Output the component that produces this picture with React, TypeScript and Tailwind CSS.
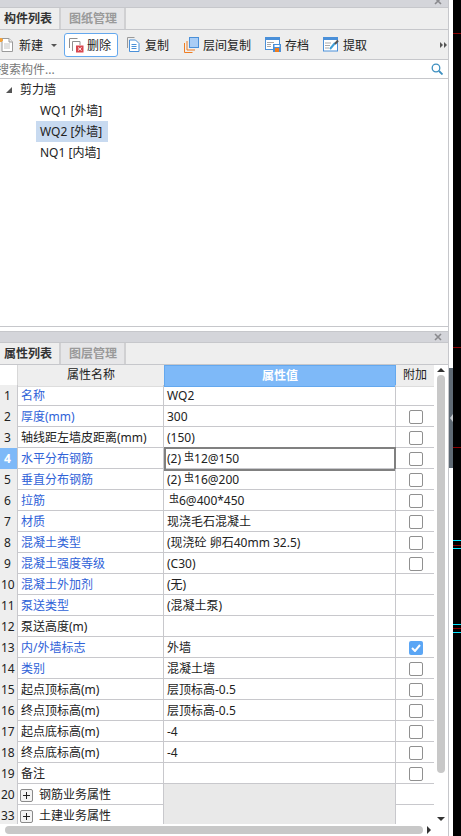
const FONT = "font-['Noto_Sans','Noto_Sans_CJK_SC',sans-serif]"

const Rebar = ({ first }: { first?: boolean }) => (
  <span className={first ? "ml-[2px] text-[10px] leading-[0] align-[3px] text-[#222]" : "ml-[3px] text-[10px] leading-[0] align-[3px] text-[#222]"}>虫</span>
)

const CloseX = () => (
  <svg width="8" height="8" viewBox="0 0 8 8" className="block">
    <path d="M1 1l6 6M7 1L1 7" stroke="#8a8a8e" strokeWidth="1.6" />
  </svg>
)

const NewIcon = () => (
  <svg width="15" height="16" viewBox="0 0 15 16" className="block">
    <path d="M3 1.500h7l3.500 3.500v9.500H3z" fill="#fff" stroke="#9a9a9a" />
    <path d="M10 1.500V5h3.500" fill="#eee" stroke="#9a9a9a" />
    <path d="M5 7h6M5 9h6M5 11h6" stroke="#c4c4c4" />
    <path d="M0 1h3v1h1v2H3v1H0z" fill="#f2a23c" />
  </svg>
)

const DeleteIcon = () => (
  <svg width="16" height="16" viewBox="0 0 16 16" className="block">
    <path d="M1.500 11V1.500h8" fill="none" stroke="#8f8f8f" />
    <path d="M4.500 14V4.500h7.500V8" fill="#fff" stroke="#8f8f8f" />
    <rect x="8" y="8.500" width="7.500" height="7" fill="#d9474f" />
    <path d="M10 10.500l3.500 3M13.500 10.500l-3.500 3" stroke="#fff" />
  </svg>
)

const CopyIcon = () => (
  <svg width="14" height="15" viewBox="0 0 14 15" className="block">
    <path d="M.5 11V.5h7" fill="none" stroke="#9a9a9a" />
    <path d="M2.500 3h6l3.500 3.500v8H2.500z" fill="#fff" stroke="#4a90d9" />
    <path d="M4.500 7.500h5M4.500 9.500h5M4.500 11.500h5" stroke="#4a90d9" />
  </svg>
)

const FloorCopyIcon = () => (
  <svg width="15" height="16" viewBox="0 0 15 16" className="block">
    <path d="M.5 6v9.500h8" fill="none" stroke="#ef7d22" />
    <path d="M3 4v9h8" fill="none" stroke="#ef7d22" />
    <rect x="5.500" y=".5" width="9" height="10" fill="#a9cdf6" stroke="#4a90d9" />
  </svg>
)

const SaveIcon = () => (
  <svg width="16" height="15" viewBox="0 0 16 15" className="block">
    <rect x=".5" y=".5" width="14" height="12" fill="#fff" stroke="#4a90d9" />
    <rect x="0" y="0" width="15" height="3" fill="#4a90d9" />
    <path d="M2 5.500h7M2 7.500h4M2 9.500h4" stroke="#a8a8a8" />
    <rect x="8" y="7" width="8" height="8" fill="#4a90d9" />
    <rect x="9.500" y="8" width="5" height="2" fill="#fff" />
    <rect x="10" y="11" width="4" height="4" fill="#f07d1e" />
  </svg>
)

const ExtractIcon = () => (
  <svg width="16" height="15" viewBox="0 0 16 15" className="block">
    <rect x=".5" y=".5" width="14" height="13.500" fill="#fff" stroke="#4a90d9" />
    <rect x="0" y="0" width="15" height="3" fill="#4a90d9" />
    <path d="M2 6h6M2 8.500h5M2 11h4" stroke="#a8a8a8" />
    <path d="M7 12l5-6" stroke="#3f9fd8" strokeWidth="2" />
    <path d="M12 7l3-3.500" stroke="#555" strokeWidth="2" />
  </svg>
)

const Checkbox = ({ checked }: { checked?: boolean }) =>
  checked ? (
    <span className="flex h-[14px] w-[14px] items-center justify-center rounded-[2px] bg-[#5ba6f5]">
      <svg width="10" height="8" viewBox="0 0 10 8">
        <path d="M1 4l3 3 5-6" fill="none" stroke="#fff" strokeWidth="2" />
      </svg>
    </span>
  ) : (
    <span className="h-[14px] w-[14px] rounded-[2px] border border-[#909090] bg-white" />
  )

const PanelHeader = ({ active, other }: { active: string; other: string }) => (
  <div className="flex h-[22px] border-b border-[#c6c7cb] bg-[#eeeeee] text-[12px] font-bold leading-[21px]">
    <div className="w-[61px] border-r-2 border-[#d0d0d2] pl-[4px] text-[#333]">{active}</div>
    <div className="w-[65px] border-r-2 border-[#d0d0d2] bg-[#e6e6e8] pl-[8px] text-[#9a9a9a]">{other}</div>
  </div>
)

type Row = {
  no: number
  name: string
  blue?: boolean
  value?: React.ReactNode
  box?: boolean
  checked?: boolean
}

const rows: Row[] = [
  { no: 1, name: "名称", blue: true, value: "WQ2" },
  { no: 2, name: "厚度(mm)", blue: true, value: "300", box: true },
  { no: 3, name: "轴线距左墙皮距离(mm)", value: "(150)", box: true },
  { no: 4, name: "水平分布钢筋", blue: true, value: <>(2)<Rebar />12@150</>, box: true },
  { no: 5, name: "垂直分布钢筋", blue: true, value: <>(2)<Rebar />16@200</>, box: true },
  { no: 6, name: "拉筋", blue: true, value: <><Rebar first />6@400*450</>, box: true },
  { no: 7, name: "材质", blue: true, value: "现浇毛石混凝土", box: true },
  { no: 8, name: "混凝土类型", blue: true, value: "(现浇砼 卵石40mm 32.5)", box: true },
  { no: 9, name: "混凝土强度等级", blue: true, value: "(C30)", box: true },
  { no: 10, name: "混凝土外加剂", blue: true, value: "(无)" },
  { no: 11, name: "泵送类型", blue: true, value: "(混凝土泵)" },
  { no: 12, name: "泵送高度(m)" },
  { no: 13, name: "内/外墙标志", blue: true, value: "外墙", box: true, checked: true },
  { no: 14, name: "类别", blue: true, value: "混凝土墙", box: true },
  { no: 15, name: "起点顶标高(m)", value: "层顶标高-0.5", box: true },
  { no: 16, name: "终点顶标高(m)", value: "层顶标高-0.5", box: true },
  { no: 17, name: "起点底标高(m)", value: "-4", box: true },
  { no: 18, name: "终点底标高(m)", value: "-4", box: true },
  { no: 19, name: "备注", box: true },
]

const ToolButton = ({ icon, label, className }: { icon: React.ReactNode; label: string; className?: string }) => (
  <div className={`flex items-center ${className ?? ""}`}>
    {icon}
    <span className="ml-[4px] mt-[2px]">{label}</span>
  </div>
)

const GroupRow = ({ no, label }: { no: number; label: string }) => (
  <div className="grid h-[21px] grid-cols-[18px_146px_232px_38px] border-b border-[#c8c8cc] leading-[22px]">
    <div className="border-r border-[#c8c8cc] bg-[#eeeeee] pl-[1px]">{no}</div>
    <div className="flex items-center border-r border-[#c8c8cc]">
      <span className="ml-[2px] flex h-[13px] w-[13px] items-center justify-center rounded-[2px] border border-[#8a8a8a] bg-[#f4f4f4]">
        <svg width="7" height="7" viewBox="0 0 7 7"><path d="M3.500 0v7M0 3.500h7" stroke="#222" /></svg>
      </span>
      <span className="ml-[6px]">{label}</span>
    </div>
    <div className="border-r border-[#c8c8cc] bg-[#e9e9e9]" />
    <div />
  </div>
)

export default function App() {
  return (
    <div className={`flex h-[836px] w-[461px] overflow-hidden bg-white text-[12px] text-[#222] ${FONT}`}>
      <div className="flex h-full w-[449px] flex-col border-r border-[#c6c7cb]">
        {/* upper panel */}
        <div className="flex h-[8px] justify-end overflow-hidden border-b border-[#c6c7cb] bg-[#d4d5da] pr-[6px]">
          <div className="-mt-[3px]"><CloseX /></div>
        </div>
        <PanelHeader active="构件列表" other="图纸管理" />
        <div className="flex h-[30px] items-center border-b border-[#c6c7cb] bg-[#eeeeee] leading-[16px]">
          <div className="-ml-[1px] flex items-center">
            <NewIcon />
            <span className="ml-[5px] mt-[2px]">新建</span>
            <span className="ml-[8px] mt-[1px] h-0 w-0 border-x-[3px] border-t-[3px] border-x-transparent border-t-[#555]" />
          </div>
          <div className="ml-[7px] flex h-[24px] w-[54px] items-center rounded-[3px] border border-[#64a8ee] bg-white pl-[3px]">
            <DeleteIcon />
            <span className="ml-[3px] mt-[2px]">删除</span>
          </div>
          <ToolButton className="ml-[9px]" icon={<CopyIcon />} label="复制" />
          <ToolButton className="ml-[15px]" icon={<FloorCopyIcon />} label="层间复制" />
          <ToolButton className="ml-[14px]" icon={<SaveIcon />} label="存档" />
          <ToolButton className="ml-[14px]" icon={<ExtractIcon />} label="提取" />
          <div className="ml-auto mr-[1px] flex">
            <span className="h-0 w-0 border-y-[3px] border-l-[3px] border-y-transparent border-l-[#555]" />
            <span className="ml-[1px] h-0 w-0 border-y-[3px] border-l-[3px] border-y-transparent border-l-[#555]" />
          </div>
        </div>
        <div className="flex h-[19px] items-start justify-between border-b border-[#c6c7cb] bg-white leading-[20px]">
          <span className="-ml-[3px] text-[#777]">搜索构件...</span>
          <svg width="12" height="12" viewBox="0 0 12 12" className="mr-[5px] mt-[3px] block">
            <circle cx="5" cy="5" r="3.800" fill="none" stroke="#3d8fc0" strokeWidth="1.300" />
            <path d="M8 8l3.500 3.500" stroke="#3d8fc0" strokeWidth="1.800" />
          </svg>
        </div>
        <div className="h-[248px] border-b border-[#c6c7cb] bg-white leading-[22px]">
          <div className="flex h-[21px] items-start">
            <span className="ml-[6px] mt-[8px] h-0 w-0 border-b-[6px] border-l-[6px] border-b-[#555] border-l-transparent" />
            <span className="ml-[8px]">剪力墙</span>
          </div>
          <div className="h-[21px] pl-[40px]">WQ1 [外墙]</div>
          <div className="ml-[36px] h-[21px] w-[72px] bg-[#c8daf0] pl-[4px]">WQ2 [外墙]</div>
          <div className="h-[21px] pl-[40px]">NQ1 [内墙]</div>
        </div>

        {/* lower panel */}
        <div className="h-[4px] bg-white" />
        <div className="flex h-[12px] items-center justify-end border-y border-[#c6c7cb] bg-[#d4d5da] pr-[6px]">
          <CloseX />
        </div>
        <PanelHeader active="属性列表" other="图层管理" />
        <div className="flex min-h-0 flex-1">
          <div className="w-[434px]">
            <div className="h-[459px] overflow-hidden">
              <div className="grid h-[20px] grid-cols-[18px_146px_232px_38px] text-center leading-[20px]">
                <div className="border-r border-[#d8d8d8] bg-white" />
                <div className="border-b border-[#dddddd] bg-[#eeeeee]">属性名称</div>
                <div className="border border-[#64a8ee] bg-[#7eb9f8] font-bold text-white">属性值</div>
                <div className="border-b border-[#dddddd] bg-[#eeeeee]">附加</div>
              </div>
              {rows.map((r) => (
                <div key={r.no} className="grid h-[21px] grid-cols-[18px_146px_232px_38px] border-b border-[#c8c8cc] leading-[22px]">
                  <div className={r.no === 4
                    ? "border-r border-[#c8c8cc] bg-[#7eb9f8] pl-[4px] font-bold text-white"
                    : r.no < 10
                      ? "border-r border-[#c8c8cc] bg-[#eeeeee] pl-[4px]"
                      : "border-r border-[#c8c8cc] bg-[#eeeeee] pl-[1px]"}>{r.no}</div>
                  <div className={r.blue
                    ? "border-r border-[#c8c8cc] pl-[3px] whitespace-nowrap text-[#2f62d8]"
                    : "border-r border-[#c8c8cc] pl-[3px] whitespace-nowrap"}>{r.name}</div>
                  <div className={r.no === 4
                    ? "-my-[1px] border-2 border-[#808080] pl-[1px] leading-[20px] whitespace-nowrap"
                    : "border-r border-[#c8c8cc] pl-[3px] whitespace-nowrap"}>{r.value}</div>
                  <div className="flex items-center justify-center pl-[1px]">
                    {r.box && <Checkbox checked={r.checked} />}
                  </div>
                </div>
              ))}
              <GroupRow no={20} label="钢筋业务属性" />
              <GroupRow no={33} label="土建业务属性" />
            </div>
            <div className="flex h-[12px] items-center pl-[5px]">
              <div className="h-[8px] w-[418px] rounded-full bg-[#c8c8c8]" />
              <span className="ml-[4px] h-0 w-0 border-y-[4px] border-l-[4px] border-y-transparent border-l-[#333]" />
            </div>
          </div>
          <div className="flex w-[14px] flex-col items-center px-[3px] pt-[3px]">
            <span className="h-0 w-0 border-x-[4px] border-b-[4px] border-x-transparent border-b-[#333]" />
            <div className="mt-[3px] h-[398px] w-[8px] shrink-0 rounded-full bg-[#c8c8c8]" />
            <span className="mt-[44px] h-0 w-0 border-x-[4px] border-t-[4px] border-x-transparent border-t-[#333]" />
          </div>
        </div>
      </div>

      {/* splitter */}
      <div className="w-[4px] pt-[368px]">
        <div className="flex h-[100px] items-center bg-[#5f6a74] pl-[1px]">
          <span className="h-0 w-0 border-y-[4px] border-r-[3px] border-y-transparent border-r-[#c8ccd0]" />
        </div>
      </div>

      {/* drawing canvas behind the panels */}
      <div className="relative w-[8px] bg-black">
        <div className="absolute inset-x-0 top-[33px] h-px bg-[#8b0000]" />
        <div className="absolute inset-x-0 top-[347px] h-px bg-[#8b0000]" />
        <div className="absolute inset-x-0 top-[447px] h-px bg-[#8b0000]" />
        <div className="absolute inset-x-0 top-[540px] h-px bg-[#00e5ff]" />
        <div className="absolute inset-x-0 top-[545px] h-px bg-[#8b0000]" />
        <div className="absolute inset-x-0 top-[548px] h-px bg-[#00e5ff]" />
        <div className="absolute inset-x-0 top-[624px] h-px bg-[#00e5ff]" />
        <div className="absolute inset-x-0 top-[628px] h-px bg-[#8b0000]" />
        <div className="absolute inset-x-0 top-[632px] h-px bg-[#00e5ff]" />
      </div>
    </div>
  )
}
